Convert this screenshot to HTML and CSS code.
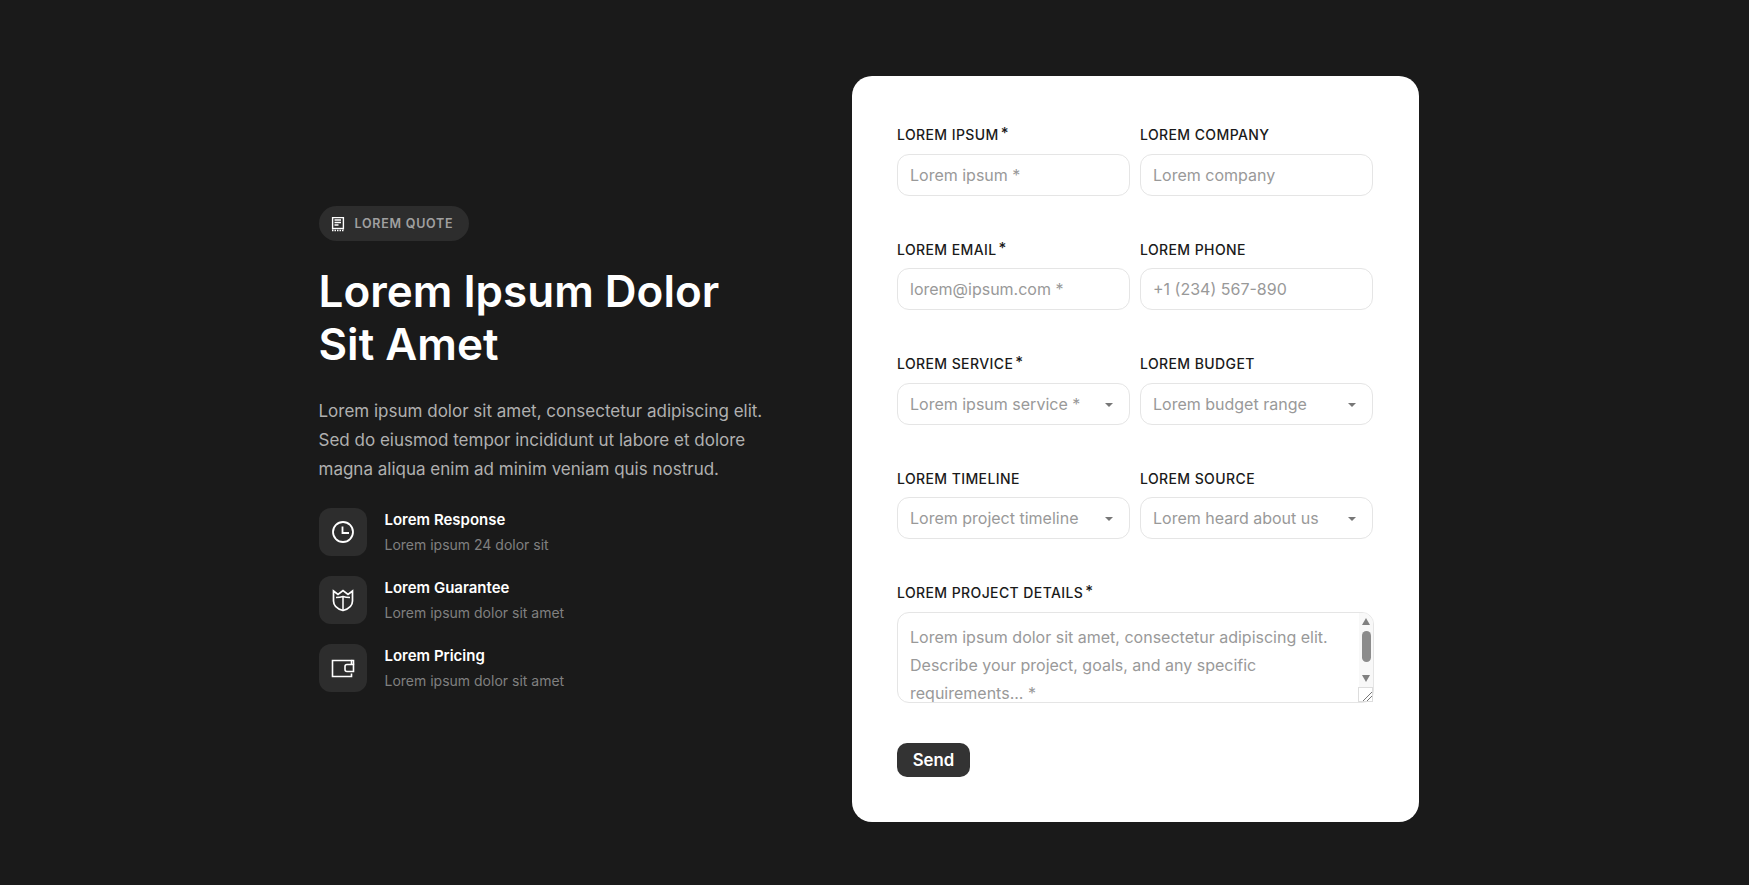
FILE: index.html
```html
<!DOCTYPE html>
<html lang="en">
<head>
<meta charset="utf-8">
<title>Lorem Quote</title>
<link rel="stylesheet" href="styles.css">
</head>
<body>
<main class="page">
  <section class="intro">
    <div class="badge">
      <svg class="badge-icon" viewBox="0 0 16 16" fill="none" stroke="currentColor" stroke-width="1.400"><path d="M2.600 13.500V1.600h10.800v11.900"/><path d="M4.500 4h6.500M4.500 6.500h6.500M4.500 9h4"/><path d="M2 14.500h12" stroke-width="1.500" stroke-dasharray="1.500 1"/><path d="M2.600 12.500h10.800"/></svg>
      <span>LOREM QUOTE</span>
    </div>
    <h1>Lorem Ipsum Dolor<br>Sit Amet</h1>
    <p class="lead">Lorem ipsum dolor sit amet, consectetur adipiscing elit. Sed do eiusmod tempor incididunt ut labore et dolore magna aliqua enim ad minim veniam quis nostrud.</p>
    <ul class="features">
      <li class="feature">
        <div class="feature-icon"><svg viewBox="0 0 24 24" fill="none" stroke="currentColor" stroke-width="1.800"><circle cx="12" cy="12" r="10"/><path d="M11.500 6.500V13h6.500"/></svg></div>
        <div><div class="feature-title">Lorem Response</div><div class="feature-sub">Lorem ipsum 24 dolor sit</div></div>
      </li>
      <li class="feature">
        <div class="feature-icon"><svg viewBox="0 0 24 24" fill="none" stroke="currentColor" stroke-width="1.700"><path d="M2.500 3L7 6.500 12 2.500l5 4L21.500 3V13c0 4.500-4 8-9.500 9.500C6.500 21 2.500 17.500 2.500 13z"/><path d="M12 8.500v14M5 9.500c2.500 0 5-.3 7-1 2 .7 4.500 1 7 1" stroke-width="1.500"/></svg></div>
        <div><div class="feature-title">Lorem Guarantee</div><div class="feature-sub">Lorem ipsum dolor sit amet</div></div>
      </li>
      <li class="feature">
        <div class="feature-icon"><svg viewBox="0 0 24 24" fill="none" stroke="currentColor" stroke-width="1.600"><path d="M20.500 8.500V4.500H1.500v16h19v-3"/><path d="M20.500 4.500h2v4"/><path d="M22.500 8.500H16a2 2 0 0 0-2 2v3a2 2 0 0 0 2 2h6.500z"/></svg></div>
        <div><div class="feature-title">Lorem Pricing</div><div class="feature-sub">Lorem ipsum dolor sit amet</div></div>
      </li>
    </ul>
  </section>
  <form class="card">
    <div class="row">
      <label class="field"><span class="label">LOREM IPSUM<sup>*</sup></span><input placeholder="Lorem ipsum *"></label>
      <label class="field"><span class="label">LOREM COMPANY</span><input placeholder="Lorem company"></label>
    </div>
    <div class="row">
      <label class="field"><span class="label">LOREM EMAIL<sup>*</sup></span><input placeholder="lorem@ipsum.com *"></label>
      <label class="field"><span class="label">LOREM PHONE</span><input placeholder="+1 (234) 567-890"></label>
    </div>
    <div class="row">
      <label class="field"><span class="label">LOREM SERVICE<sup>*</sup></span><span class="select"><select><option>Lorem ipsum service *</option></select></span></label>
      <label class="field"><span class="label">LOREM BUDGET</span><span class="select"><select><option>Lorem budget range</option></select></span></label>
    </div>
    <div class="row">
      <label class="field"><span class="label">LOREM TIMELINE</span><span class="select"><select><option>Lorem project timeline</option></select></span></label>
      <label class="field"><span class="label">LOREM SOURCE</span><span class="select"><select><option>Lorem heard about us</option></select></span></label>
    </div>
    <label class="field"><span class="label">LOREM PROJECT DETAILS<sup>*</sup></span>
      <span class="textarea-wrap">
        <textarea rows="3" placeholder="Lorem ipsum dolor sit amet, consectetur adipiscing elit. Describe your project, goals, and any specific requirements... *"></textarea>
        <span class="scrollbar"><span class="arrow-up"></span><span class="thumb"></span><span class="arrow-down"></span></span>
      </span>
    </label>
    <button type="button" class="send">Send</button>
  </form>
</main>
</body>
</html>
```
FILE: styles.css
```css
* { box-sizing: border-box; }
html, body { margin: 0; height: 100%; }
body { background: #1a1a1a; font-family: Inter, "Liberation Sans", sans-serif; }
.page { height: 885px; display: flex; align-items: center; padding: 13px 0 0 318.500px; }
.intro { width: 533.500px; padding-right: 70px; color: #fff; }
.badge { display: inline-flex; align-items: center; gap: 9px; height: 35px; padding: 0 16px 0 11px; border-radius: 18px; background: #2d2d2d; color: #a0a0a0; font-size: 12.500px; font-weight: 600; letter-spacing: 0.75px; }
.badge-icon { width: 16px; height: 16px; color: #fff; }
h1 { margin: 24px 0 0; font-size: 44px; line-height: 52.800px; font-weight: 600; color: #fff; }
.lead { margin: 26px 0 0; font-size: 17px; line-height: 29px; color: #b0b0b0; }
.features { list-style: none; margin: 24px 0 0; padding: 0; display: flex; flex-direction: column; gap: 20px; }
.feature { display: flex; align-items: center; gap: 18px; }
.feature-icon { width: 48px; height: 48px; border-radius: 12px; background: #2d2d2d; display: flex; align-items: center; justify-content: center; flex: none; }
.feature-icon svg { width: 24px; height: 24px; }
.feature-title { font-size: 15px; font-weight: 600; line-height: 22px; color: #fff; }
.feature-sub { margin-top: 4px; font-size: 14px; line-height: 20px; color: #808080; }
.card { width: 567px; height: 746px; background: #fff; border-radius: 20px; padding: 50px 45px 45px; display: flex; flex-direction: column; align-items: stretch; }
.row { display: grid; grid-template-columns: 233px 233px; gap: 10px; margin-bottom: 45px; }
.field { display: flex; flex-direction: column; }
.label { height: 18px; margin-bottom: 9.500px; font-size: 14px; font-weight: 500; line-height: 18px; letter-spacing: 0.400px; color: #1a1a1a; }
.label sup { font-size: 15px; line-height: 0; margin-left: 2px; vertical-align: 2px; }
.select { position: relative; display: block; }
.select::after { content: ""; position: absolute; right: 17.500px; top: 20px; border-style: solid; border-width: 4px 4px 0; border-color: #777 transparent transparent; }
input, select, textarea { width: 100%; height: 42px; border: 1px solid #e5e5e5; border-radius: 12px; background: #fff; padding: 0 12px; font: 400 16px Inter, sans-serif; color: #999; outline: none; }
select { appearance: none; display: block; }
input::placeholder, textarea::placeholder { color: #999; }
.textarea-wrap { position: relative; display: block; }
textarea { height: 91px; padding: 10px 27px 10px 12px; line-height: 28px; display: block; overflow: hidden; }
textarea::-webkit-resizer { background: linear-gradient(135deg, #fff 62%, #777 62% 68%, #fff 68% 78%, #777 78% 84%, #fff 84%); border: 1px solid #ddd; }
.scrollbar { position: absolute; top: 1px; right: 1px; width: 14px; height: 74px; padding: 5px 0 0 3px; display: flex; flex-direction: column; align-items: flex-start; background: #f8f8f8; border-top-right-radius: 11px; }
.arrow-up { border-style: solid; border-width: 0 4.500px 7px; border-color: transparent transparent #808080; }
.thumb { width: 9px; height: 31px; margin: 6px 0 13px; border-radius: 5px; background: #8c8c8c; }
.arrow-down { border-style: solid; border-width: 7px 4.500px 0; border-color: #808080 transparent transparent; }
.send { align-self: flex-start; margin-top: 40px; width: 73px; height: 34px; border: 0; border-radius: 10px; background: #333; color: #fff; font: 600 16.800px Inter, sans-serif; }
```
